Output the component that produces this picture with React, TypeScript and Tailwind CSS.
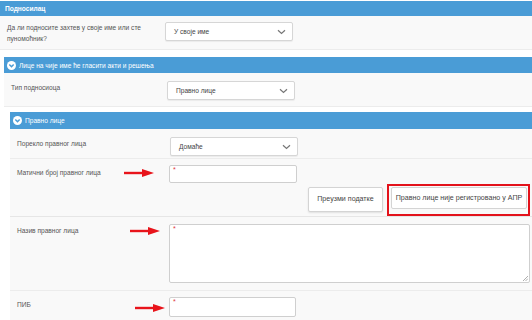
import React from "react";

const Arrow = ({ className }: { className?: string }) => (
  <svg className={className} width="30" height="8" viewBox="0 0 30 8">
    <rect x="0" y="2.8" width="20" height="2.4" fill="#e8141b" />
    <polygon points="18,0 30,4 18,8" fill="#e8141b" />
  </svg>
);

const Chevron = () => (
  <svg width="9" height="6" viewBox="0 0 9 6" className="shrink-0">
    <path d="M1 1.2 L4.5 4.5 L8 1.2" fill="none" stroke="#777" strokeWidth="1.2" />
  </svg>
);

const CircleIcon = () => (
  <svg width="9" height="9" viewBox="0 0 10 10" className="shrink-0">
    <circle cx="5" cy="5" r="5" fill="#fff" />
    <path d="M2.6 4 L5 6.4 L7.4 4" fill="none" stroke="#4a9cd6" strokeWidth="1.6" />
  </svg>
);

const Select = ({ value, className }: { value: string; className?: string }) => (
  <div
    className={`flex items-center justify-between h-[19px] w-[128px] bg-white border border-[#d6d6d6] rounded-[2px] pl-[8px] pr-[6px] text-[#444] shadow-[0_1px_1px_rgba(0,0,0,0.06)] ${className ?? ""}`}
  >
    <span>{value}</span>
    <Chevron />
  </div>
);

const Input = ({ className }: { className?: string }) => (
  <div className={`relative bg-white border border-[#cfcfcf] rounded-[2px] ${className ?? ""}`}>
    <span className="absolute left-[3px] top-[0px] text-[#e0393e] text-[7px] leading-none">*</span>
  </div>
);

export default function App() {
  return (
    <div
      className="w-[532px] h-[320px] overflow-hidden bg-white text-[6.6px] leading-[11px] text-[#555]"
      style={{ fontFamily: "'Liberation Sans', Arial, sans-serif" }}
    >
      {/* Header 1 */}
      <div className="mt-[1px] h-[15px] bg-[#4a9cd6] text-white font-bold flex items-center pl-[5px]">
        Подносилац
      </div>
      {/* Row 1 */}
      <div className="h-[34px] bg-[#f9f9f9] border-b border-[#ececec] flex items-start pt-[6px]">
        <div className="w-[165px] pl-[7px] pr-[12px] pt-[0px]">
          Да ли подносите захтев у своје име или сте пуномоћник?
        </div>
        <Select value="У своје име" />
      </div>

      {/* Section 2 */}
      <div className="ml-[4px] mt-[7px]">
        <div className="h-[16px] bg-[#4a9cd6] text-white flex items-center gap-[3px] pl-[3px]">
          <CircleIcon />
          <span>Лице на чије име ће гласити акти и решења</span>
        </div>
        <div className="h-[34px] bg-[#f9f9f9] border-b border-[#ececec] flex items-start pt-[8px]">
          <div className="w-[163px] pl-[7px] pt-[1px]">Тип подносиоца</div>
          <Select value="Правно лице" />
        </div>

        {/* Section 3 */}
        <div className="ml-[6px] mt-[5px]">
          <div className="h-[17px] bg-[#4a9cd6] text-white flex items-center gap-[3px] pl-[3px]">
            <CircleIcon />
            <span>Правно лице</span>
          </div>
          <div className="h-[30px] bg-[#f9f9f9] border-b border-[#ececec] flex items-start pt-[8px]">
            <div className="w-[160px] pl-[7px] pt-[1px]">Порекло правног лица</div>
            <Select value="Домаће" />
          </div>
          <div className="h-[58px] bg-[#f9f9f9] border-b border-[#e6e6e6] flex flex-col pt-[6px]">
            <div className="flex items-start">
              <div className="w-[114px] pl-[7px] pt-[2px]">Матични број правног лица</div>
              <Arrow className="mt-[4px]" />
              <Input className="ml-[15px] w-[128px] h-[18px]" />
            </div>
            <div className="flex items-start mt-[4px] ml-[298px] text-[7.1px]">
              <div className="h-[25px] w-[75px] bg-white border border-[#d4d4d4] rounded-[2px] flex items-center justify-center text-[#444] shadow-[0_1px_2px_rgba(0,0,0,0.1)]">
                Преузми податке
              </div>
              <div className="ml-[4px] -mt-[3px] h-[32px] w-[143px] border-[2px] border-[#e3121b] flex items-start pt-[1px] pl-[2px]">
                <div className="h-[22px] w-[136px] bg-white border border-[#d4d4d4] rounded-[2px] flex items-center justify-center text-[#444]">
                  Правно лице није регистровано у АПР
                </div>
              </div>
            </div>
          </div>
          <div className="h-[74px] bg-[#f9f9f9] border-b border-[#ececec] flex items-start pt-[7px]">
            <div className="w-[120px] pl-[7px] pt-[1px]">Назив правног лица</div>
            <Arrow className="mt-[3px]" />
            <div className="relative ml-[9px] w-[361px] h-[59px] bg-white border border-[#cfcfcf] rounded-[2px]">
              <span className="absolute left-[3px] top-[0px] text-[#e0393e] text-[7px] leading-none">*</span>
              <svg className="absolute right-[1px] bottom-[1px]" width="6" height="6" viewBox="0 0 6 6">
                <path d="M6 1 L1 6 M6 3.5 L3.5 6" stroke="#999" strokeWidth="0.8" />
              </svg>
            </div>
          </div>
          <div className="h-[40px] bg-[#f9f9f9] flex items-start pt-[6px]">
            <div className="w-[125px] pl-[7px] pt-[2px]">ПИБ</div>
            <Arrow className="mt-[7px]" />
            <Input className="ml-[4px] w-[127px] h-[20px]" />
          </div>
        </div>
      </div>
    </div>
  );
}
